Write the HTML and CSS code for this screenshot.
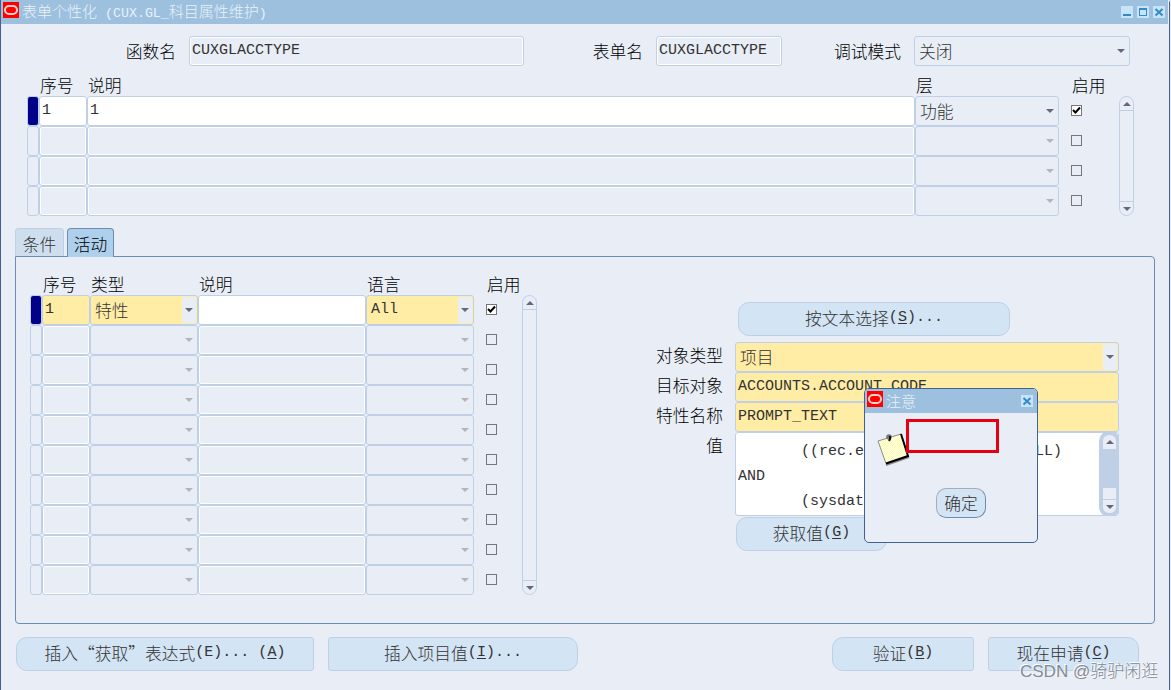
FILE: index.html
```html
<!DOCTYPE html>
<html lang="zh-CN">
<head>
<meta charset="utf-8">
<title>表单个性化</title>
<link rel="stylesheet" href="styles.css">
</head>
<body>
<svg class="defs" width="0" height="0">
  <symbol id="logo" viewBox="0 0 16 16"><path fill="#f00" d="M0 0h16v16H0z"/><rect x="2" y="4" width="12" height="8" rx="4" fill="none" stroke="#ffd3c9" stroke-width="2"/></symbol>
  <symbol id="close" viewBox="0 0 12 12"><path fill="#c6e3f7" d="M0 0h12v12H0z"/><path d="M2.5 3l7 6.500M9.500 3l-7 6.500" stroke="#338ac8" stroke-width="2" fill="none"/></symbol>
  <symbol id="check" viewBox="0 0 9 9"><path d="M1 4l2.500 2.500L8 1.500" stroke="#000" stroke-width="2" fill="none"/></symbol>
</svg>
<div class="window">
  <header class="titlebar">
    <svg class="logo"><use href="#logo"/></svg>
    <h1 class="title">表单个性化<span class="en"> (CUX.GL_</span>科目属性维护<span class="en">)</span></h1>
    <div class="controls">
      <svg class="ctl" viewBox="0 0 12 12"><path fill="#c6e3f7" d="M0 0h12v12H0z"/><path fill="#338ac8" d="M2 8h8v2H2z"/></svg>
      <svg class="ctl" viewBox="0 0 12 12"><path fill="#c6e3f7" d="M0 0h12v12H0z"/><path fill="#338ac8" d="M2 2h8v8H2zM3 4v5h6V4z" fill-rule="evenodd"/></svg>
      <svg class="ctl"><use href="#close"/></svg>
    </div>
  </header>

  <section class="query">
    <label class="lbl">函数名</label><div class="cell ro"><span class="en">CUXGLACCTYPE</span></div>
    <label class="lbl">表单名</label><div class="cell ro"><span class="en">CUXGLACCTYPE</span></div>
    <label class="lbl">调试模式</label><div class="cell sel live">关闭</div>
  </section>

  <section class="block rules">
    <div class="row head"><span></span><span>序号</span><span>说明</span><span>层</span><span class="h-en">启用</span></div>
    <div class="body">
      <div class="rows">
        <div class="row"><div class="mark on"></div><div class="cell white"><span class="en">1</span></div><div class="cell white"><span class="en">1</span></div><div class="cell sel live">功能</div><div class="box on"><svg><use href="#check"/></svg></div></div>
        <div class="row"><div class="mark"></div><div class="cell ro"></div><div class="cell ro"></div><div class="cell sel"></div><div class="box"></div></div>
        <div class="row"><div class="mark"></div><div class="cell ro"></div><div class="cell ro"></div><div class="cell sel"></div><div class="box"></div></div>
        <div class="row"><div class="mark"></div><div class="cell ro"></div><div class="cell ro"></div><div class="cell sel"></div><div class="box"></div></div>
      </div>
      <div class="scroll"><i class="up"></i><i class="down"></i></div>
    </div>
  </section>

  <nav class="tabs"><div class="tab">条件</div><div class="tab active">活动</div></nav>
  <main class="panel">
    <section class="block actions">
      <div class="row head"><span></span><span>序号</span><span>类型</span><span>说明</span><span>语言</span><span class="h-en">启用</span></div>
      <div class="body">
        <div class="rows">
          <div class="row"><div class="mark on"></div><div class="cell req"><span class="en">1</span></div><div class="cell req sel live">特性</div><div class="cell white"></div><div class="cell req sel live"><span class="en">All</span></div><div class="box on"><svg><use href="#check"/></svg></div></div>
          <div class="row"><div class="mark"></div><div class="cell ro"></div><div class="cell sel"></div><div class="cell ro"></div><div class="cell sel"></div><div class="box"></div></div>
          <div class="row"><div class="mark"></div><div class="cell ro"></div><div class="cell sel"></div><div class="cell ro"></div><div class="cell sel"></div><div class="box"></div></div>
          <div class="row"><div class="mark"></div><div class="cell ro"></div><div class="cell sel"></div><div class="cell ro"></div><div class="cell sel"></div><div class="box"></div></div>
          <div class="row"><div class="mark"></div><div class="cell ro"></div><div class="cell sel"></div><div class="cell ro"></div><div class="cell sel"></div><div class="box"></div></div>
          <div class="row"><div class="mark"></div><div class="cell ro"></div><div class="cell sel"></div><div class="cell ro"></div><div class="cell sel"></div><div class="box"></div></div>
          <div class="row"><div class="mark"></div><div class="cell ro"></div><div class="cell sel"></div><div class="cell ro"></div><div class="cell sel"></div><div class="box"></div></div>
          <div class="row"><div class="mark"></div><div class="cell ro"></div><div class="cell sel"></div><div class="cell ro"></div><div class="cell sel"></div><div class="box"></div></div>
          <div class="row"><div class="mark"></div><div class="cell ro"></div><div class="cell sel"></div><div class="cell ro"></div><div class="cell sel"></div><div class="box"></div></div>
          <div class="row"><div class="mark"></div><div class="cell ro"></div><div class="cell sel"></div><div class="cell ro"></div><div class="cell sel"></div><div class="box"></div></div>
        </div>
        <div class="scroll"><i class="up"></i><i class="down"></i></div>
      </div>
    </section>
    <section class="detail">
      <div class="btn pick">按文本选择<span class="en">(<u>S</u>)...</span></div>
      <div class="props">
        <label class="lbl">对象类型</label><div class="cell req sel live">项目</div>
        <label class="lbl">目标对象</label><div class="cell req"><span class="en">ACCOUNTS.ACCOUNT_CODE</span></div>
        <label class="lbl">特性名称</label><div class="cell req"><span class="en">PROMPT_TEXT</span></div>
        <label class="lbl">值</label>
        <div class="cell white area">
          <pre class="en code">       <b>((</b>rec.end_date IS       NULL)
AND
       <b>(</b>sysdate</pre>
          <div class="scroll filled"><i class="up"></i><i class="rest"></i><i class="down"></i></div>
        </div>
      </div>
      <div class="btn fetch">获取值<span class="en">(<u>G</u>)</span></div>
    </section>
  </main>

  <footer class="foot">
    <div class="btn first b1">插入“获取”表达式<span class="en">(E)... (<u>A</u>)</span></div>
    <div class="btn last b2">插入项目值<span class="en">(<u>I</u>)...</span></div>
    <div class="btn first b3">验证<span class="en">(<u>B</u>)</span></div>
    <div class="btn last b4">现在申请<span class="en">(<u>C</u>)</span></div>
  </footer>
</div>

<div class="dialog">
  <div class="dlg-bar"><svg class="logo"><use href="#logo"/></svg><span class="title">注意</span><svg class="ctl"><use href="#close"/></svg></div>
  <div class="dlg-msg">
    <svg class="note" viewBox="0 0 33 34">
      <defs><pattern id="dots" width="2" height="2" patternUnits="userSpaceOnUse"><path fill="#fff" d="M0 0h2v2H0z"/><path fill="#ffff99" d="M0 0h1v1H0zM1 1h1v1H1z"/></pattern></defs>
      <path d="M9 33L32 25" stroke="#888" stroke-width="2"/>
      <path d="M1 9L24 2L31 24L9 31.500z" fill="url(#dots)" stroke="#8a8a8a"/>
      <path d="M24 2L31 24L9 31.500" fill="none" stroke="#000" stroke-width="2"/>
      <circle cx="12" cy="5" r="2.800" fill="#777"/><path d="M13 4v3l-1 2" stroke="#111" stroke-width="2" fill="none"/>
    </svg>
    <div class="redact"></div>
  </div>
  <div class="ok">确定</div>
</div>
<div class="watermark">CSDN @骑驴闲逛</div>
</body>
</html>
```
FILE: styles.css
```css
* { box-sizing: border-box; }
body {
  margin: 0; width: 1171px; height: 690px; overflow: hidden; position: relative;
  background: #e9eef6; color: #333;
  font: 300 16.75px/20px "Noto Sans CJK SC", sans-serif;
}
.defs { position: absolute; }
.en { font-family: "Liberation Mono", monospace; font-size: 15px; font-weight: 400; white-space: pre; }
.window { width: 1170px; height: 690px; border: solid #44628f; border-width: 0 1px; background: #e9eef6; display: flex; flex-direction: column; border-top-right-radius: 3px; }

.titlebar { height: 24px; flex: none; background: #9dc0df; display: flex; align-items: center; padding: 0 3px 0 2px; border-right: 1px solid #e9eef6; }
.logo { width: 16px; height: 16px; flex: none; margin-bottom: 4px; }
.title { margin: 0 0 0 3px; font-size: 15px; font-weight: 300; color: #e9f1f8; }
.title .en { font-size: 13.300px; }
.controls { margin-left: auto; display: flex; gap: 4px; }
.ctl { width: 12px; height: 12px; display: block; }

.lbl { color: #000; white-space: nowrap; text-align: right; }
.query { height: 30px; margin-top: 12px; flex: none; display: grid; align-items: center; grid-template-columns: 177px 335px 133px 126px 132px 216px; column-gap: 0; padding-left: 0; }
.query .lbl { padding-right: 1px; }
.query { grid-template-columns: 176px 335px 132px 126px 132px 216px; column-gap: 0; }
.query .cell { margin-left: 12px; margin-right: -12px; }

.cell { height: 30px; border: 1px solid #bfd0e6; border-radius: 3px; padding: 0 2px; display: flex; align-items: center; overflow: hidden; white-space: nowrap; min-width: 0; }
.cell.ro { box-shadow: inset 0 0 0 1px #fff; }
.cell.white { background: #fff; }
.cell.req { background: #ffeda6; }
.sel { padding-left: 4px; }
.sel::after { content: ""; margin-left: auto; margin-right: 2px; border: 4px solid transparent; border-top-color: #b5b5b5; border-bottom: 0; }
.sel.live::after { border-top-color: #66677f; }
.req.sel { padding-right: 0; }
.req.sel::after { border: 0; margin-right: 1px; width: 14px; height: 26px; background: linear-gradient(#66677f, #66677f) 0 0 / 0 0 no-repeat #e9eef6; clip-path: none; }
.req.sel { position: relative; }
.req.sel::before { content: ""; position: absolute; right: 4px; top: 12px; border: 4px solid transparent; border-top-color: #66677f; border-bottom: 0; }

.block .row { display: grid; height: 30px; align-items: center; }
.head { color: #000; }
.block .head { height: 20px; white-space: nowrap; }
.head span { padding-left: 1px; }
.head .h-en { padding-left: 2px; }
.body { display: flex; }
.mark { height: 30px; border: 1px solid #bfd0e6; border-radius: 3px; }
.mark.on { background: #00008b; }
.box { width: 11px; height: 11px; border: 1px solid #777; margin: -2px 0 0 12px; }
.box.on { background: #fff; }
.box svg { width: 9px; height: 9px; display: block; }
.scroll { width: 15px; border: 1px solid #bfd0e6; border-radius: 8px; display: flex; flex-direction: column; justify-content: space-between; overflow: hidden; }
.scroll i { height: 14px; display: flex; align-items: center; justify-content: center; flex: none; }
.scroll .up { border-bottom: 1px solid #bfd0e6; }
.scroll .down { border-top: 1px solid #bfd0e6; }
.up::after, .down::after { content: ""; border: 4px solid transparent; }
.up::after { border-bottom-color: #66677f; border-top: 0; }
.down::after { border-top-color: #66677f; border-bottom: 0; }

.rules { margin: 9px 0 0 26px; flex: none; }
.rules .row { grid-template-columns: 12px 48px 828px 144px 60px; }
.rules .head { margin-bottom: 1px; }
.rules .head .h-en { padding-left: 13px; }

.tabs { height: 28px; margin: 12px 0 0 14px; flex: none; display: flex; gap: 3px; }
.tab { height: 28px; border: 1px solid #bfd0e6; border-bottom: 0; border-radius: 4px 4px 0 0; background: #cfdeee; display: flex; align-items: center; justify-content: center; width: 49px; padding-top: 2px; }
.tab.active { width: 47px; height: 29px; background: #afd0ec; border-color: #6c8cb0; color: #000; z-index: 1; }
.panel { flex: none; width: 1140px; height: 368px; margin-left: 14px; border: 1px solid #6c8cb0; border-radius: 0 4px 4px 4px; display: flex; }
.actions { margin: 17px 0 0 14px; width: 507px; flex: none; }
.actions .row { grid-template-columns: 12px 48px 108px 168px 108px 48px; }
.actions .head { margin-bottom: 1px; }
.actions .head .h-en { padding-left: 13px; }

.detail { margin: 45px 0 0 108px; width: 475px; }
.btn { height: 34px; border: 1px solid #bfd0e6; border-radius: 11px; background: #d3e4f4; display: flex; align-items: center; justify-content: center; padding-bottom: 2px; white-space: nowrap; flex: none; }
.btn u { text-underline-offset: 2px; text-decoration-thickness: 1px; }
.pick { width: 272px; margin-left: 93px; }
.props { margin-top: 6px; display: grid; grid-template-columns: 78px 384px; column-gap: 12px; }
.props .lbl { line-height: 27px; }
.props { width: 475px; }
.props .cell { padding-bottom: 0; }
.area.cell { height: 84px; padding: 0; align-items: stretch; }
.code { margin: 6px 0 0 2px; line-height: 25px; flex: 1; overflow: hidden; }
.code b { font-weight: 400; }
.filled { background: #bfd0e6; margin: 1px; height: 80px; border-color: #bfd0e6; border-radius: 7px; box-shadow: 0 0 0 3px #bfd0e6; }
.filled i { background: #e9eef6; }
.filled .up { border: 0; }
.filled .rest { height: 11px; margin-top: auto; }
.fetch { width: 151px; margin: 1px 0 0 91px; }

.foot { margin: 13px 0 0 15px; display: flex; }
.first { border-radius: 11px 3px 3px 11px; }
.last { border-radius: 3px 11px 11px 3px; margin-left: 14px; }
.b1 { width: 298px; }
.b2 { width: 250px; }
.b3 { width: 142px; margin-left: 254px; }
.b4 { width: 151px; }

.dialog { position: absolute; left: 864px; top: 388px; width: 174px; height: 155px; border: 1px solid #44628f; border-radius: 5px; background: #e9eef6; overflow: hidden; }
.dlg-bar { height: 24px; background: #9dc0df; display: flex; align-items: center; padding: 0 4px 0 2px; }
.dlg-bar .ctl { margin-left: auto; }
.dlg-msg { display: flex; padding: 6px 0 0 12px; }
.note { width: 33px; height: 34px; margin-top: 13px; flex: none; fill: none; }
.redact { width: 93px; height: 34px; border: 3px solid #e60012; margin-left: -4px; z-index: 1; }
.ok { width: 50px; height: 30px; margin: 22px 0 0 71px; border: 1px solid #6c8cb0; border-top-color: #a5aeb8; border-left-color: #a5aeb8; border-radius: 10px; background: #d3e4f4; display: flex; align-items: center; justify-content: center; }
.watermark { position: absolute; left: 1020px; top: 662px; font: 300 17px/20px "Liberation Sans", "Noto Sans CJK SC", sans-serif; color: #858a92; text-shadow: -1px -1px 0 #fff; white-space: nowrap; }
```
